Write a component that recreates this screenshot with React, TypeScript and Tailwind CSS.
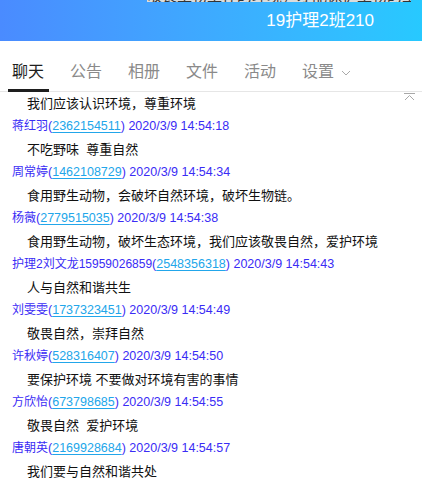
import React from 'react';

type Msg = { name: string; qq: string; time: string; text: string };

// Latin digits from Liberation Sans, Chinese from the CJK family
const FONT = { fontFamily: '"Liberation Sans", "Noto Sans CJK SC", sans-serif' };

const tabs = ['聊天', '公告', '相册', '文件', '活动', '设置'];

// the first line continues a message whose header is scrolled away
const firstText = '我们应该认识环境，尊重环境';

const messages: Msg[] = [
  { name: '蒋红羽', qq: '2362154511', time: '2020/3/9 14:54:18', text: '不吃野味  尊重自然' },
  { name: '周常婷', qq: '1462108729', time: '2020/3/9 14:54:34', text: '食用野生动物，会破坏自然环境，破坏生物链。' },
  { name: '杨薇', qq: '2779515035', time: '2020/3/9 14:54:38', text: '食用野生动物，破坏生态环境，我们应该敬畏自然，爱护环境' },
  { name: '护理2刘文龙15959026859', qq: '2548356318', time: '2020/3/9 14:54:43', text: '人与自然和谐共生' },
  { name: '刘雯雯', qq: '1737323451', time: '2020/3/9 14:54:49', text: '敬畏自然，崇拜自然' },
  { name: '许秋婷', qq: '528316407', time: '2020/3/9 14:54:50', text: '要保护环境 不要做对环境有害的事情' },
  { name: '方欣怡', qq: '673798685', time: '2020/3/9 14:54:55', text: '敬畏自然  爱护环境' },
  { name: '唐朝英', qq: '2169928684', time: '2020/3/9 14:54:57', text: '我们要与自然和谐共处' },
];

const TextLine = ({ text }: { text: string }) => (
  <div className="h-[23px] leading-[23px] pl-[27px] text-[13px] text-[#111] whitespace-pre">{text}</div>
);

const NameLine = ({ m }: { m: Msg }) => (
  <div className="h-[23px] leading-[23px] pl-[12px] text-[12px] text-[#3a2cf5] whitespace-pre">
    {m.name}
    <span className="text-[12.5px]">
      (<span className="text-[#22a6ea] underline underline-offset-2">{m.qq}</span>) {m.time}
    </span>
  </div>
);

export default function App() {
  return (
    <div className="w-[422px] h-[490px] bg-white overflow-hidden relative" style={FONT}>
      {/* title bar */}
      <div className="h-[41px] bg-gradient-to-r from-[#4a8bff] to-[#27c9ff] flex items-center justify-end pr-[48px] relative">
        <span className="text-white text-[17px]">19护理2班210</span>
        {/* bottom edge of a window behind, peeking over the bar */}
        <div className="absolute left-[147px] top-0 w-[264px] h-[2px] bg-[#dcdcdc] overflow-hidden">
          <div className="text-[15px] leading-[15px] text-[#333] -mt-[12px] whitespace-nowrap">
            敬畏生物生存的环境，才能保护生物的生存环境和自然
          </div>
        </div>
      </div>

      {/* tabs */}
      <div className="h-[51px] border-b border-[#e6e6e6] flex items-end pl-[12px] gap-[26px]">
        {tabs.map((t, i) => (
          <div key={t} className="relative h-full flex items-center pt-[11px]">
            <span className={`text-[16px] ${i === 0 ? 'text-[#1e1e1e]' : 'text-[#8a8a8a]'}`}>{t}</span>
            {i === tabs.length - 1 && (
              <svg className="ml-[7px] mt-[2px]" width="10" height="6" viewBox="0 0 10 6">
                <path d="M1 1l4 4 4-4" fill="none" stroke="#aaa" strokeWidth="1" />
              </svg>
            )}
            {i === 0 && <div className="absolute left-[-4px] right-[-5px] bottom-[-1px] h-[3px] bg-[#1e1e1e]" />}
          </div>
        ))}
      </div>

      {/* chat list */}
      <div className="relative">
        <svg className="absolute right-[6px] top-[1px]" width="13" height="8" viewBox="0 0 13 8">
          <path d="M1 0.5h11M2 7l4.5-4.5L11 7" fill="none" stroke="#a8a8a8" strokeWidth="1" />
        </svg>
        <TextLine text={firstText} />
        {messages.map((m) => (
          <React.Fragment key={m.qq}>
            <NameLine m={m} />
            <TextLine text={m.text} />
          </React.Fragment>
        ))}
      </div>
    </div>
  );
}
